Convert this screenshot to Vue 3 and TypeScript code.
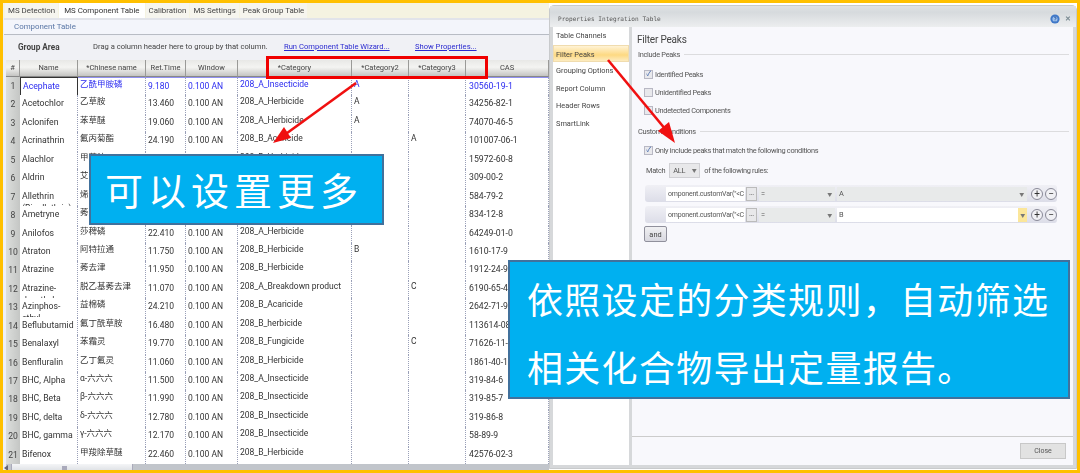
<script setup lang="ts">
interface Row { name: string; cn: string; rt: string; cat: string; c2: string; c3: string; cas: string }
const rows: Row[] = [
  { name: 'Acephate', cn: '乙酰甲胺磷', rt: '9.180', cat: '208_A_Insecticide', c2: 'A', c3: '', cas: '30560-19-1' },
  { name: 'Acetochlor', cn: '乙草胺', rt: '13.460', cat: '208_A_Herbicide', c2: 'A', c3: '', cas: '34256-82-1' },
  { name: 'Aclonifen', cn: '苯草醚', rt: '19.060', cat: '208_A_Herbicide', c2: 'A', c3: '', cas: '74070-46-5' },
  { name: 'Acrinathrin', cn: '氟丙菊酯', rt: '24.190', cat: '208_B_Acaricide', c2: '', c3: 'A', cas: '101007-06-1' },
  { name: 'Alachlor', cn: '甲草胺', rt: '17.020', cat: '208_B_Herbicide', c2: '', c3: '', cas: '15972-60-8' },
  { name: 'Aldrin', cn: '艾氏剂', rt: '18.610', cat: '208_B_Insecticide', c2: '', c3: '', cas: '309-00-2' },
  { name: 'Allethrin (Bioallethrin)', cn: '烯丙菊酯', rt: '19.720', cat: '208_B_Insecticide', c2: '', c3: '', cas: '584-79-2' },
  { name: 'Ametryne', cn: '莠灭净', rt: '16.150', cat: '208_B_Herbicide', c2: '', c3: '', cas: '834-12-8' },
  { name: 'Anilofos', cn: '莎稗磷', rt: '22.410', cat: '208_A_Herbicide', c2: '', c3: '', cas: '64249-01-0' },
  { name: 'Atraton', cn: '阿特拉通', rt: '11.750', cat: '208_B_Herbicide', c2: 'B', c3: '', cas: '1610-17-9' },
  { name: 'Atrazine', cn: '莠去津', rt: '11.950', cat: '208_B_Herbicide', c2: '', c3: '', cas: '1912-24-9' },
  { name: 'Atrazine-desethyl', cn: '脱乙基莠去津', rt: '11.070', cat: '208_A_Breakdown product', c2: '', c3: 'C', cas: '6190-65-4' },
  { name: 'Azinphos-ethyl', cn: '益棉磷', rt: '24.210', cat: '208_B_Acaricide', c2: '', c3: '', cas: '2642-71-9' },
  { name: 'Beflubutamid', cn: '氟丁酰草胺', rt: '16.480', cat: '208_B_herbicide', c2: '', c3: '', cas: '113614-08-7' },
  { name: 'Benalaxyl', cn: '苯霜灵', rt: '19.770', cat: '208_B_Fungicide', c2: '', c3: 'C', cas: '71626-11-4' },
  { name: 'Benfluralin', cn: '乙丁氟灵', rt: '11.060', cat: '208_B_Herbicide', c2: '', c3: '', cas: '1861-40-1' },
  { name: 'BHC, Alpha', cn: 'α-六六六', rt: '11.500', cat: '208_A_Insecticide', c2: '', c3: '', cas: '319-84-6' },
  { name: 'BHC, Beta', cn: 'β-六六六', rt: '11.990', cat: '208_B_Insecticide', c2: '', c3: '', cas: '319-85-7' },
  { name: 'BHC, delta', cn: 'δ-六六六', rt: '12.780', cat: '208_B_Insecticide', c2: '', c3: '', cas: '319-86-8' },
  { name: 'BHC, gamma', cn: 'γ-六六六', rt: '12.170', cat: '208_B_Insecticide', c2: '', c3: '', cas: '58-89-9' },
  { name: 'Bifenox', cn: '甲羧除草醚', rt: '22.460', cat: '208_B_Herbicide', c2: '', c3: '', cas: '42576-02-3' },
]
const tabs = ['MS Detection', 'MS Component Table', 'Calibration', 'MS Settings', 'Peak Group Table']
const headers = ['#', 'Name', '*Chinese name', 'Ret.Time', 'Window', '*Category', '*Category2', '*Category3', 'CAS']
const nav = ['Table Channels', 'Filter Peaks', 'Grouping Options', 'Report Column', 'Header Rows', 'SmartLink']
const includes = [
  { label: 'Identified Peaks', on: true },
  { label: 'Unidentified Peaks', on: false },
  { label: 'Undetected Components', on: false },
]
const rules = [
  { value: 'A', active: false },
  { value: 'B', active: true },
]
</script>

<template>
  <div class="frame">
    <section class="left">
      <div class="tabs">
        <span v-for="(t, i) in tabs" :key="t" class="tab" :class="{ on: i === 1 }">{{ t }}</span>
      </div>
      <div class="pane-title"><span>Component Table</span></div>
      <div class="group">
        <b>Group Area</b>
        <span class="hint">Drag a column header here to group by that column.</span>
        <a class="wizard">Run Component Table Wizard...</a>
        <a class="props">Show Properties...</a>
      </div>
      <div class="grid-wrap">
        <div class="row head">
          <div v-for="h in headers" :key="h" class="hc">{{ h }}</div>
        </div>
        <div v-for="(r, i) in rows" :key="r.name" class="row body" :class="{ sel: i === 0 }">
          <div class="num">{{ i + 1 }}</div>
          <div class="c name" :class="{ focus: i === 0 }">{{ r.name }}</div>
          <div class="c cn">{{ r.cn }}</div>
          <div class="c v">{{ r.rt }}</div>
          <div class="c v">0.100 AN</div>
          <div class="c up">{{ r.cat }}</div>
          <div class="c up">{{ r.c2 }}</div>
          <div class="c up">{{ r.c3 }}</div>
          <div class="c v cas">{{ r.cas }}</div>
        </div>
        <div class="scroll">
          <div class="thumb"><i class="larr"></i><i class="grip"></i></div>
        </div>
      </div>
    </section>

    <section class="dialog">
      <header class="titlebar">
        <span class="dtitle">Properties Integration Table</span>
        <svg class="help" width="10" height="10" viewBox="0 0 10 10">
          <circle cx="5" cy="5" r="4.6" fill="#3f78c8" />
          <circle cx="5" cy="5" r="2.6" fill="#9cc0ec" />
          <path d="M4 3.6c.4-.8 2.2-.7 2.1.5 0 .8-1 .8-1.1 1.6M5 6.8v.6" stroke="#1d4c96" fill="none" stroke-width=".9" />
        </svg>
        <span class="x">✕</span>
      </header>
      <div class="dbody">
        <nav class="nav">
          <div v-for="(n, i) in nav" :key="n" class="nitem" :class="{ on: i === 1 }">{{ n }}</div>
        </nav>
        <div class="content">
          <div class="scrollarea">
            <h2>Filter Peaks</h2>
            <div class="legend"><span>Include Peaks</span><i></i></div>
            <div class="checks">
              <label v-for="c in includes" :key="c.label" class="ck">
                <span class="box">{{ c.on ? '✓' : '' }}</span>{{ c.label }}
              </label>
            </div>
            <div class="legend second"><span>Custom Conditions</span><i></i></div>
            <label class="ck only"><span class="box">✓</span>Only include peaks that match the following conditions</label>
            <div class="match">
              <span>Match</span>
              <span class="all">ALL<em>▼</em></span>
              <span>of the following rules:</span>
            </div>
            <div v-for="r in rules" :key="r.value" class="rule">
              <span class="expr">omponent.customVar("&lt;C</span>
              <span class="dots">...</span>
              <span class="op">=<em>▼</em></span>
              <span class="val" :class="{ act: r.active }">{{ r.value }}<em>▼</em></span>
              <span class="round">+</span>
              <span class="round">−</span>
            </div>
            <button class="and">and</button>
          </div>
          <footer class="foot"><button class="close">Close</button></footer>
        </div>
      </div>
    </section>

    <div class="redbox"></div>
    <svg class="arrows" width="1080" height="473" viewBox="0 0 1080 473">
      <g stroke="#f01010" stroke-width="2.6" fill="#f01010">
        <line x1="356" y1="83" x2="283" y2="136" />
        <path d="M274 143 L285 127 L292 138 Z" stroke="none" transform="translate(-1 0)" />
        <line x1="608" y1="60" x2="666" y2="130" />
        <path d="M675 143 L658 131 L669 122 Z" stroke="none" />
      </g>
    </svg>
    <div class="callout one">可以设置更多</div>
    <div class="callout two">
      <p>依照设定的分类规则，自动筛选</p>
      <p>相关化合物导出定量报告。</p>
    </div>
  </div>
</template>

<style>
html, body { margin: 0; background: #fff; }
</style>

<style scoped>
.frame {
  position: relative;
  width: 1080px;
  height: 473px;
  box-sizing: border-box;
  border: 3px solid #ffc000;
  display: flex;
  overflow: hidden;
  background: #fff;
  font-family: Roboto, "Noto Sans CJK SC", sans-serif;
  color: #333;
}
.left {
  width: 546px;
  flex: none;
  display: flex;
  flex-direction: column;
  background: #eef0f6;
  filter: blur(0.35px);
}
.tabs {
  height: 15px;
  display: flex;
  background: #f5f3e1;
  padding-left: 2px;
  font-size: 7.9px;
  line-height: 16px;
  flex: none;
}
.tab { padding: 0 3px; margin-right: 1px; background: #f6f5ee; color: #444; white-space: nowrap; }
.tab.on { background: #fff; color: #333; padding: 0 5px; }
.pane-title {
  height: 17px;
  flex: none;
  margin-left: 1px;
  background: linear-gradient(#e2e4ea 0 2px, #f3f5fb 2px);
  border-bottom: 1px solid #b8bcc4;
  box-sizing: border-box;
  font-size: 7.9px;
  line-height: 18px;
  padding-left: 10px;
  color: #5a77a6;
}
.group {
  height: 24px;
  flex: none;
  display: flex;
  align-items: center;
  font-size: 7.6px;
  background: #f0f1f5;
  margin-top: 1px;
  margin-left: 3px;
  padding-bottom: 3px;
  box-sizing: border-box;
  color: #444;
  white-space: nowrap;
}
.group b { margin-left: 12px; width: 42px; font-weight: 700; font-size: 8.2px; }
.hint { margin-left: 33px; width: 169px; }
.group a { color: #2b2bd0; text-decoration: underline; }
.wizard { margin-left: 22px; width: 105px; }
.props { margin-left: 26px; }
.grid-wrap {
  margin-left: 3px;
  width: 543px;
  flex: 1;
  min-height: 0;
  background: #c1c5cb;
  display: flex;
  flex-direction: column;
}
.row {
  display: grid;
  grid-template-columns: 14px 58px 68px 40px 52px 114px 57px 57px 83px;
  flex: none;
}
.head { height: 17px; }
.hc {
  background: linear-gradient(#e8e8e6, #f4f4f2 45%, #c4c4c2);
  border-right: 1px solid #9a9a98;
  border-bottom: 1px solid #888;
  box-sizing: border-box;
  font-size: 7.5px;
  line-height: 16px;
  text-align: center;
  color: #444;
  white-space: nowrap;
  overflow: hidden;
}
.body { height: 18.45px; background: #fff; }
.num {
  background: linear-gradient(90deg, #dcdedc, #c4c6c4);
  border-bottom: 1px solid #a8a8a8;
  box-sizing: border-box;
  font-size: 8.6px;
  line-height: 19px;
  text-align: center;
  color: #444;
}
.c {
  box-sizing: border-box;
  border-right: 1px dotted #9aa0b8;
  border-bottom: 1px dotted #9a9a9a;
  padding-left: 2px;
  line-height: 12px;
  overflow: hidden;
  color: #333;
}
.name { font-size: 8.7px; padding-top: 2px; white-space: normal; }
.v { font-size: 8.5px; padding-top: 2px; white-space: nowrap; }
.cas { font-size: 8.7px; padding-left: 3px; }
.cn { font-size: 8.5px; padding-top: 0; white-space: nowrap; }
.up { padding-top: 0; font-size: 8.5px; white-space: nowrap; }
.sel .c { color: #2a2af0; }
.sel .c { border-bottom: 2px solid #a0a0f0; border-top: 1px solid #9090f0; }
.focus { border: 1px solid #333 !important; color: #2a2af0; }
.scroll { height: 8px; display: flex; flex: none; background: #c1c5cb; }
.thumb {
  width: 122px;
  margin-left: 5px;
  background: linear-gradient(#f4f5f7, #dde0e4);
  border: 1px solid #aab;
  border-top: none;
  box-sizing: border-box;
  position: relative;
}
.larr {
  position: absolute;
  left: -8px;
  top: 1px;
  border: 3px solid transparent;
  border-right: 4px solid #667;
  border-left: 0;
}
.grip { position: absolute; left: 50px; top: 2px; width: 5px; height: 4px; background: #aab; }

.dialog {
  flex: 1;
  min-width: 0;
  margin-top: 2px;
  display: flex;
  flex-direction: column;
  background: #d6d8da;
  border: 1px solid #c8cacc;
  border-radius: 5px 5px 0 0;
  box-sizing: border-box;
  filter: blur(0.3px);
  padding: 0 3px 3px 3px;
  margin-bottom: 1px;
}
.titlebar {
  height: 21px;
  flex: none;
  display: flex;
  align-items: center;
  margin: 0 -3px;
  padding: 4px 3px 0 8px;
  box-sizing: border-box;
  background: linear-gradient(#e0e2e4, #d6dadd 30%, #eceeef);
}
.dtitle {
  flex: 1;
  font-family: "DejaVu Sans Mono", monospace;
  font-size: 6.1px;
  color: #555;
}
.help { margin-right: 5px; }
.x { font-size: 7px; color: #7a8a92; margin-right: 2px; font-weight: 700; }
.dbody { flex: 1; min-height: 0; display: flex; gap: 3px; background: #d6d8da; }
.nav { width: 76px; flex: none; background: #fff; font-size: 7.4px; color: #444; }
.nitem { height: 17.6px; line-height: 17px; padding-left: 3px; white-space: nowrap; }
.nitem.on {
  background: linear-gradient(#fff3d6, #fdd982 60%, #fdecc0);
  border: 1px solid #f0dcae;
  box-sizing: border-box;
  padding-left: 2px;
}
.content { flex: 1; min-width: 0; display: flex; flex-direction: column; background: #f8f8fc; }
.scrollarea {
  flex: 1;
  min-height: 0;
  padding: 5px 4px 0 5px;
  border-bottom: 1px solid #ccc;
  font-size: 7.4px;
  letter-spacing: -0.3px;
  color: #555;
}
h2 { margin: 0; font-size: 10px; font-weight: 400; line-height: 15px; color: #444; letter-spacing: -0.2px; }
.legend { display: flex; align-items: center; gap: 4px; height: 12px; margin-top: 1px; padding-left: 1px; }
.legend i { flex: 1; height: 1px; background: #dcdcde; }
.second { margin-top: 9px; }
.checks { display: flex; flex-direction: column; gap: 6px; margin-top: 8px; padding-left: 7px; }
.ck { display: flex; align-items: center; gap: 2px; height: 12px; white-space: nowrap; }
.box {
  width: 7px;
  height: 7px;
  border: 1px solid #b8b8c4;
  background: #e8e8ec;
  display: inline-block;
  font-size: 7px;
  line-height: 7px;
  text-align: center;
  color: #3a62a8;
}
.only { margin-top: 7px; padding-left: 7px; }
.match { display: flex; align-items: center; gap: 4px; margin-top: 7px; padding-left: 9px; height: 15px; }
.all {
  width: 31px;
  height: 15px;
  box-sizing: border-box;
  background: #e8e8ea;
  border: 1px solid #d0d0d4;
  line-height: 13px;
  padding-left: 3px;
  position: relative;
}
em { font-style: normal; position: absolute; right: 3px; top: 0; font-size: 5px; color: #777; }
.rule {
  display: flex;
  align-items: center;
  margin: 0 12px 0 8px;
  height: 17px;
  padding-left: 21px;
  background: linear-gradient(#f0f0f5, #dcdde8);
  border-radius: 3px;
  box-sizing: border-box;
  gap: 2px;
}
.rule + .rule { margin-top: 4px; }
.match + .rule { margin-top: 7px; }
.expr { width: 79px; height: 14px; background: #fff; font-size: 7px; letter-spacing: -0.2px; line-height: 14px; padding-left: 2px; box-sizing: border-box; white-space: nowrap; overflow: hidden; margin-right: -1px; }
.dots { width: 11px; height: 14px; background: #e8e8ea; border: 1px solid #bbb; box-sizing: border-box; line-height: 9px; text-align: center; }
.op, .val { height: 14px; line-height: 14px; background: #e8eaea; position: relative; padding-left: 2px; box-sizing: border-box; }
.op { width: 76px; }
.val { width: 190px; }
.val.act { background: #fff; }
.val.act em { background: #fbe69a; right: 0; width: 9px; height: 14px; text-align: center; }
.round {
  width: 10px;
  height: 10px;
  border: 1px solid #8a8a98;
  border-radius: 50%;
  font-size: 10px;
  line-height: 9px;
  text-align: center;
  background: #f0f0f4;
  color: #333;
  letter-spacing: 0;
}
.val + .round { margin-left: 2px; }
.and {
  display: block;
  margin: 3px 0 0 7px;
  width: 23px;
  height: 16px;
  padding: 0;
  font: inherit;
  color: #444;
  background: linear-gradient(#f0f0f2, #d8d8e0);
  border: 1px solid #90909c;
  border-radius: 2px;
}
.foot { height: 28px; flex: none; background: #f8f8fc; display: flex; justify-content: flex-end; align-items: center; padding-right: 7px; }
.close { width: 46px; height: 16px; padding: 0; background: #e2e2e2; border: 1px solid #c8c8c8; font-size: 7px; font-family: inherit; color: #555; }

.redbox {
  position: absolute;
  left: 263px;
  top: 53px;
  width: 222px;
  height: 23px;
  box-sizing: border-box;
  border: 3px solid #f00000;
}
.arrows { position: absolute; left: -3px; top: -3px; pointer-events: none; }
.callout {
  position: absolute;
  box-sizing: border-box;
  background: #00b0f0;
  border: 2px solid #41719c;
  color: #fff;
  font-family: "Noto Sans CJK SC", sans-serif;
}
.one {
  left: 86px;
  top: 151px;
  width: 295px;
  height: 71px;
  font-size: 38px;
  line-height: 65px;
  letter-spacing: 5px;
  padding-left: 14px;
  white-space: nowrap;
}
.two {
  left: 505px;
  top: 257px;
  width: 562px;
  height: 139px;
  font-size: 36px;
  letter-spacing: 1.3px;
  padding: 2px 0 0 17px;
  white-space: nowrap;
}
.two p { margin: 0; line-height: 68px; }
</style>
